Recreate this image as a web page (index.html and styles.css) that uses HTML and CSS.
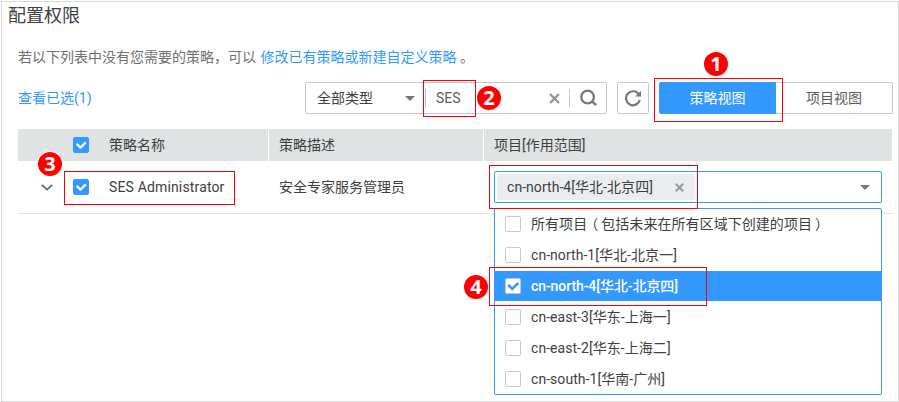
FILE: index.html
```html
<!DOCTYPE html>
<html lang="zh-CN">
<head>
<meta charset="utf-8">
<title>配置权限</title>
<link rel="stylesheet" href="styles.css">
</head>
<body>
<main class="panel">
  <h1 class="title">配置权限</h1>
  <p class="hint">若以下列表中没有您需要的策略，可以 <a class="link">修改已有策略或新建自定义策略</a> 。</p>
  <div class="toolbar">
    <a class="link selected-count">查看已选(1)</a>
    <div class="search">
      <span class="search-type">全部类型</span>
      <svg class="caret" width="10" height="5" viewBox="0 0 10 5"><path d="M0 0h10L5 5z" fill="#777"/></svg>
      <span class="divider first"></span>
      <span class="search-text">SES</span>
      <svg class="clear" width="11" height="11" viewBox="0 0 11 11"><path d="M1 1l9 9M10 1l-9 9" stroke="#949494" stroke-width="2.3"/></svg>
      <span class="divider second"></span>
      <svg class="magnifier" width="18" height="18" viewBox="0 0 18 18" fill="none" stroke="#777" stroke-width="2.3"><circle cx="7.6" cy="8" r="6.3"/><path d="M12 12.3l4.2 3.9"/></svg>
    </div>
    <button class="refresh"><svg width="18" height="18" viewBox="0 0 18 18"><path d="M14.6 5A7 7 0 1 0 15.8 11" fill="none" stroke="#777" stroke-width="2.2"/><path d="M17 1.8v5.6h-5.8z" fill="#777"/></svg></button>
    <div class="views"><button class="view active">策略视图</button><button class="view">项目视图</button></div>
  </div>
  <div class="table">
    <div class="row head">
      <div class="cell name"><span class="expand"></span><span class="check on"><svg width="16" height="16" viewBox="0 0 16 16"><path d="M3.6 6.8l3.8 3.8 5.4-5.2" fill="none" stroke="#fff" stroke-width="2.3"/></svg></span><span>策略名称</span></div>
      <div class="cell desc">策略描述</div>
      <div class="cell scope">项目[作用范围]</div>
    </div>
    <div class="row body">
      <div class="cell name"><span class="expand"><svg width="12" height="7" viewBox="0 0 12 7"><path d="M.8.8L6 5.6 11.2.8" fill="none" stroke="#666" stroke-width="1.8"/></svg></span><span class="check on"><svg width="16" height="16" viewBox="0 0 16 16"><path d="M3.6 6.8l3.8 3.8 5.4-5.2" fill="none" stroke="#fff" stroke-width="2.3"/></svg></span><span class="policy">SES Administrator</span></div>
      <div class="cell desc">安全专家服务管理员</div>
      <div class="cell scope">
        <div class="select">
          <span class="tag">cn-north-4[华北-北京四]<svg width="9" height="9" viewBox="0 0 9 9"><path d="M.8.8l7.4 7.4M8.2.8L.8 8.2" stroke="#999" stroke-width="2.1"/></svg></span>
          <svg class="caret" width="10" height="5" viewBox="0 0 10 5"><path d="M0 0h10L5 5z" fill="#777"/></svg>
          <ul class="options">
            <li><span class="check"></span><span>所有项目<span class="paren open">（</span>包括未来在所有区域下创建的项目<span class="paren close">）</span></span></li>
            <li><span class="check"></span>cn-north-1[华北-北京一]</li>
            <li class="chosen"><span class="check"><svg width="16" height="16" viewBox="0 0 16 16"><path d="M3.2 6.8l4 4.2 6-6" fill="none" stroke="#39f" stroke-width="2.6"/></svg></span>cn-north-4[华北-北京四]</li>
            <li><span class="check"></span>cn-east-3[华东-上海一]</li>
            <li><span class="check"></span>cn-east-2[华东-上海二]</li>
            <li><span class="check"></span>cn-south-1[华南-广州]</li>
          </ul>
        </div>
      </div>
    </div>
  </div>
</main>
<div class="mark mark-view"></div>
<div class="mark mark-search"></div>
<div class="mark mark-row"></div>
<div class="mark mark-tag"></div>
<div class="mark mark-option"></div>
<span class="badge badge-1">1</span>
<span class="badge badge-2">2</span>
<span class="badge badge-3">3</span>
<span class="badge badge-4">4</span>
</body>
</html>
```
FILE: styles.css
```css
* { box-sizing: border-box; }
body {
  margin: 0;
  padding: 1px 0 0 1px;
  background: #fff;
  font: 14px/20px Roboto, "Noto Sans CJK SC", sans-serif;
  color: #404040;
  overflow: hidden;
}
svg { display: block; flex: none; }
button { font: inherit; padding: 0; background: #fff; }
.panel { width: 898px; height: 401px; border: 1px solid #d8d8d8; }
.title { margin: 0; padding-left: 6px; height: 27px; font-size: 18px; line-height: 27px; font-weight: 400; }
.hint { margin: 18px 0 0 16px; line-height: 20px; color: #707070; white-space: pre; }
.hint .link { margin-left: 1px; }
.link { color: #39f; }
.toolbar { display: flex; align-items: center; height: 32px; margin: 15px 0 0 16px; }
.selected-count { width: 287px; }
.search { display: flex; align-items: center; width: 302px; height: 32px; border: 1px solid #c8c8c8; border-radius: 2px; padding-left: 11px; }
.search-type { width: 88px; }
.divider { width: 1px; background: #c8c8c8; }
.first { height: 20px; margin: 0 10px 0 10px; }
.second { height: 18px; margin: 0 10px 0 9px; }
.search-text { width: 113px; color: #5c5c5c; }
.refresh { display: flex; align-items: center; justify-content: center; width: 32px; height: 32px; margin: 0 10px; border: 1px solid #c8c8c8; border-radius: 2px; }
.views { display: flex; }
.view { width: 117px; height: 32px; border: 1px solid #c8c8c8; border-left: 0; border-radius: 0 2px 2px 0; color: #5c5c5c; }
.view.active { border: 0; border-radius: 2px 0 0 2px; background: #39f; color: #fff; }
.table { margin: 15px 0 0 16px; width: 875px; }
.row { display: grid; grid-template-columns: 250px 214px 408px; gap: 1px; }
.head { height: 32px; width: 874px; }
.head .cell { background: #dfe3e4; }
.body { height: 53px; border-bottom: 1px solid #dfe1e2; }
.cell { display: flex; align-items: center; }
.desc { padding-left: 10px; }
.scope { padding-left: 10px; }
.expand { width: 32px; margin-left: 23px; }
.policy { letter-spacing: .15px; }
.check { display: block; flex: none; width: 16px; height: 16px; border: 1px solid #c8c8c8; border-radius: 2px; background: #fff; }
.check svg { margin: -1px; }
.check.on { background: #39f; border-color: #39f; margin-right: 20px; }
.select { position: relative; display: flex; align-items: center; justify-content: space-between; width: 388px; height: 32px; border: 1px solid #39f; border-radius: 2px; padding: 0 11px 0 2px; }
.tag { display: flex; align-items: center; justify-content: space-between; width: 198px; height: 26px; padding: 0 11px 0 10px; border-radius: 2px; background: #ebeef0; letter-spacing: .05px; }
.options { position: absolute; left: -1px; top: 36px; width: 388px; margin: 0; padding: 0; list-style: none; border: 1px solid #39f; border-radius: 2px; background: #fff; }
.options li { display: flex; align-items: center; gap: 10px; height: 30px; padding-left: 10px; white-space: nowrap; letter-spacing: .05px; }
.options li + li { margin-top: 1px; }
.options .chosen { background: #39f; color: #fff; font-weight: 500; letter-spacing: -.08px; }
.paren { position: relative; }
.open { left: -3px; }
.close { left: 3px; }
.mark { position: absolute; border: 1px solid #f00; }
.mark-view { left: 654px; top: 78px; width: 129px; height: 44px; }
.mark-search { left: 423px; top: 80px; width: 53px; height: 37px; }
.mark-row { left: 64px; top: 171px; width: 171px; height: 34px; }
.mark-tag { left: 489px; top: 165px; width: 209px; height: 44px; }
.mark-option { left: 489px; top: 267px; width: 218px; height: 39px; }
.badge { position: absolute; width: 24px; height: 24px; border-radius: 50%; background: #f00; color: #fff; font: 700 20px/24px "Open Sans", sans-serif; text-align: center; }
.badge-1 { left: 704px; top: 52px; }
.badge-2 { left: 477px; top: 86px; }
.badge-3 { left: 38px; top: 152px; box-shadow: 0 0 0 1px #fff; }
.badge-4 { left: 464px; top: 275px; }
```
